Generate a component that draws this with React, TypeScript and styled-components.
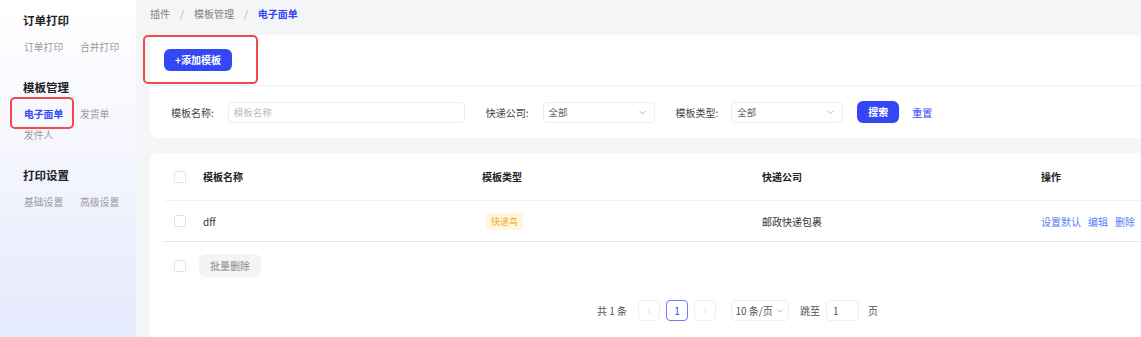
import * as React from "react";
import styled, { createGlobalStyle } from "styled-components";
import { ChevronDown, ChevronLeft, ChevronRight } from "lucide-react";

const BLUE = "#3347f5";

const GlobalStyle = createGlobalStyle`
  html, body {
    margin: 0;
    padding: 0;
    background: #f4f5f7;
    overflow: hidden;
  }
  body {
    font-family: "Noto Sans CJK SC", "Noto Sans", sans-serif;
    color: #333;
  }
  * {
    box-sizing: border-box;
  }
`;

const menu = [
  { title: "订单打印", items: ["订单打印", "合并打印"] },
  { title: "模板管理", items: ["电子面单", "发货单", "发件人"] },
  { title: "打印设置", items: ["基础设置", "高级设置"] },
];

export default function App() {
  return (
    <Layout>
      <GlobalStyle />
      <Sidebar>
        {menu.map(group => (
          <MenuGroup key={group.title}>
            <MenuTitle>{group.title}</MenuTitle>
            <MenuItems>
              {group.items.map(item => (
                <MenuItem key={item} active={item === "电子面单"}>
                  {item}
                  {item === "电子面单" && <Highlight style={{ left: -14, top: -6.5, width: 64, height: 32 }} />}
                </MenuItem>
              ))}
            </MenuItems>
          </MenuGroup>
        ))}
      </Sidebar>
      <Main>
        <Breadcrumb>
          <Crumb>插件</Crumb>
          <Sep>/</Sep>
          <Crumb>模板管理</Crumb>
          <Sep>/</Sep>
          <Crumb current>电子面单</Crumb>
        </Breadcrumb>

        <ActionCard>
          <PrimaryButton wide>
            +添加模板
            <Highlight style={{ left: -21, top: -14, width: 115, height: 49 }} />
          </PrimaryButton>
        </ActionCard>

        <FilterCard>
          <Label>模板名称:</Label>
          <TextInput width={237}>模板名称</TextInput>
          <Label spaced>快递公司:</Label>
          <Select width={112}>
            全部
            <ChevronDown size={11} strokeWidth={1.5} color="#999" />
          </Select>
          <Label spaced>模板类型:</Label>
          <Select width={112}>
            全部
            <ChevronDown size={11} strokeWidth={1.5} color="#999" />
          </Select>
          <PrimaryButton>搜索</PrimaryButton>
          <LinkButton>重置</LinkButton>
        </FilterCard>

        <TableCard>
          <HeadRow>
            <CheckCell><Checkbox /></CheckCell>
            <Cell>模板名称</Cell>
            <Cell>模板类型</Cell>
            <Cell>快递公司</Cell>
            <Cell>操作</Cell>
          </HeadRow>
          <BodyRow>
            <CheckCell><Checkbox /></CheckCell>
            <Cell>dff</Cell>
            <Cell><Tag>快递鸟</Tag></Cell>
            <Cell>邮政快递包裹</Cell>
            <Cell>
              <Actions>
                <ActionLink>设置默认</ActionLink>
                <ActionLink>编辑</ActionLink>
                <ActionLink>删除</ActionLink>
              </Actions>
            </Cell>
          </BodyRow>
          <FooterRow>
            <CheckCell><Checkbox /></CheckCell>
            <GrayButton>批量删除</GrayButton>
          </FooterRow>
          <Pagination>
            <PageText>共 1 条</PageText>
            <PageButton><ChevronLeft size={10} strokeWidth={1.5} color="#c8c8c8" /></PageButton>
            <PageButton active>1</PageButton>
            <PageButton><ChevronRight size={10} strokeWidth={1.5} color="#c8c8c8" /></PageButton>
            <SizeSelect>
              10 条/页
              <ChevronDown size={10} strokeWidth={1.5} color="#888" />
            </SizeSelect>
            <PageText>跳至</PageText>
            <JumpInput>1</JumpInput>
            <PageText>页</PageText>
          </Pagination>
        </TableCard>
      </Main>
    </Layout>
  );
}

const Layout = styled.div`
  display: flex;
  height: 100vh;
  overflow: hidden;
`;

const Sidebar = styled.aside`
  width: 136px;
  flex-shrink: 0;
  padding: 12px 0 0 23px;
  background: linear-gradient(180deg, #ffffff 0%, #f6f7fe 40%, #e4e9fc 100%);
`;

const MenuGroup = styled.div`
  margin-bottom: 21.5px;
`;

const MenuTitle = styled.div`
  font-size: 11.5px;
  line-height: 16px;
  font-weight: 700;
  color: #222;
`;

const MenuItems = styled.div`
  display: grid;
  grid-template-columns: 56px 56px;
  margin-top: 8.5px;
  padding-left: 1px;
`;

const MenuItem = styled.div<{ active?: boolean }>`
  position: relative;
  font-size: 9.8px;
  line-height: 21px;
  white-space: nowrap;
  color: ${p => (p.active ? BLUE : "#999")};
  font-weight: ${p => (p.active ? 700 : 400)};
`;

const Highlight = styled.span`
  position: absolute;
  border: 2px solid #f04a4a;
  border-radius: 5px;
  pointer-events: none;
`;

const Main = styled.main`
  flex: 1;
  padding-left: 14px;
  overflow: hidden;
`;

const Breadcrumb = styled.nav`
  height: 35px;
  display: flex;
  align-items: flex-start;
  padding-top: 7px;
  gap: 9px;
  font-size: 10px;
  line-height: 14px;
`;

const Crumb = styled.span<{ current?: boolean }>`
  color: ${p => (p.current ? BLUE : "#808080")};
  font-weight: ${p => (p.current ? 700 : 400)};
`;

const Sep = styled.span`
  color: #aaa;
  margin: 0 1px;
`;

const ActionCard = styled.section`
  width: 1185px;
  height: 51px;
  background: #fff;
  border-radius: 8px 8px 0 0;
  border-bottom: 1px solid #efefef;
  display: flex;
  align-items: center;
  padding-left: 14px;
`;

const PrimaryButton = styled.button<{ wide?: boolean }>`
  position: relative;
  height: 22px;
  padding: 0;
  width: ${p => (p.wide ? "68px" : "42px")};
  margin-left: ${p => (p.wide ? "0" : "14px")};
  border: none;
  border-radius: 6px;
  background: ${BLUE};
  color: #fff;
  font-family: inherit;
  font-size: 10px;
  font-weight: 700;
  line-height: 22px;
`;

const FilterCard = styled.section`
  width: 1185px;
  height: 52px;
  background: #fff;
  border-radius: 0 0 8px 8px;
  display: flex;
  align-items: center;
  padding-left: 21px;
`;

const Label = styled.span<{ spaced?: boolean }>`
  font-size: 10px;
  color: #444;
  margin-left: ${p => (p.spaced ? "21px" : "0")};
  margin-right: 14px;
  white-space: nowrap;
  &:nth-of-type(3) {
    margin-right: 13px;
  }
`;

const TextInput = styled.div<{ width: number }>`
  width: ${p => p.width}px;
  height: 21px;
  border: 1px solid #eceef2;
  border-radius: 4px;
  padding-left: 5px;
  font-size: 9.5px;
  line-height: 19px;
  color: #bbb;
`;

const Select = styled(TextInput)`
  display: flex;
  align-items: center;
  justify-content: space-between;
  padding-right: 6px;
  color: #666;
`;

const LinkButton = styled.span`
  margin-left: 13px;
  font-size: 10px;
  color: ${BLUE};
`;

const TableCard = styled.section`
  width: 1185px;
  margin-top: 15px;
  height: 200px;
  background: #fff;
  border-radius: 8px 8px 0 0;
  padding: 0 14px;
`;

const Row = styled.div`
  display: grid;
  grid-template-columns: 39px 279px 280px 279px 279px;
  align-items: center;
  font-size: 10px;
  color: #333;
`;

const HeadRow = styled(Row)`
  height: 48px;
  font-weight: 700;
  border-bottom: 1px solid #f2f2f2;
  color: #222;
`;

const BodyRow = styled(Row)`
  height: 41px;
  border-bottom: 1px solid #e6e6e6;
`;

const FooterRow = styled.div`
  display: flex;
  align-items: center;
  height: 47px;
`;

const CheckCell = styled.div`
  width: 39px;
  padding-left: 10px;
  display: flex;
  align-items: center;
`;

const Cell = styled.div`
  white-space: nowrap;
`;

const Checkbox = styled.span`
  display: block;
  width: 12px;
  height: 12px;
  border: 1px solid #e3e4e8;
  border-radius: 2px;
  background: #fff;
`;

const Tag = styled.span`
  display: inline-block;
  margin-left: 4px;
  padding: 0 5px;
  height: 17px;
  line-height: 17px;
  border-radius: 2px;
  background: #fff6e0;
  color: #f5a623;
  font-size: 9px;
`;

const Actions = styled.div`
  display: flex;
  gap: 7px;
`;

const ActionLink = styled.span`
  color: #5b7af6;
`;

const GrayButton = styled.span`
  margin-left: -4px;
  width: 62px;
  height: 23px;
  line-height: 23px;
  text-align: center;
  background: #f4f4f5;
  border-radius: 6px;
  color: #888;
  font-size: 10px;
`;

const Pagination = styled.div`
  display: flex;
  align-items: center;
  justify-content: center;
  margin-top: 11px;
  padding-right: 10px;
  font-size: 10px;
  color: #555;
`;

const PageText = styled.span`
  margin: 0 6px 0 6px;
  &:first-child {
    margin-right: 8px;
  }
`;

const PageButton = styled.span<{ active?: boolean }>`
  width: 22px;
  height: 21px;
  margin: 0 3px;
  display: flex;
  align-items: center;
  justify-content: center;
  border: 1px solid ${p => (p.active ? "#6a7cf8" : "#eeeff2")};
  border-radius: 4px;
  color: ${p => (p.active ? BLUE : "#555")};
`;

const SizeSelect = styled.span`
  margin-left: 12px;
  margin-right: 5px;
  width: 58px;
  height: 21px;
  display: flex;
  align-items: center;
  justify-content: center;
  gap: 2px;
  border: 1px solid #eeeff2;
  border-radius: 4px;
  color: #555;
`;

const JumpInput = styled.span`
  width: 33px;
  height: 21px;
  padding-left: 6px;
  line-height: 19px;
  border: 1px solid #eeeff2;
  border-radius: 4px;
  margin-right: 3px;
`;
